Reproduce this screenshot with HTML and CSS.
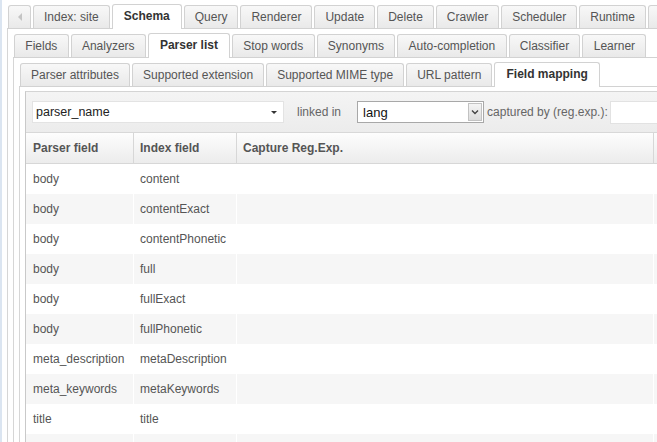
FILE: index.html
```html
<!DOCTYPE html>
<html>
<head>
<meta charset="utf-8">
<link rel="stylesheet" href="styles.css">
</head>
<body>
<div class="page">
  <div class="tabbox top">
    <div class="tabs">
      <div class="tab scroll"><span class="arrow"></span></div>
      <div class="tab">Index: site</div>
      <div class="tab sel">Schema</div>
      <div class="tab">Query</div>
      <div class="tab">Renderer</div>
      <div class="tab">Update</div>
      <div class="tab">Delete</div>
      <div class="tab">Crawler</div>
      <div class="tab">Scheduler</div>
      <div class="tab">Runtime</div>
      <div class="tab blank"></div>
    </div>
    <div class="panel">
      <div class="tabbox">
        <div class="tabs mid">
          <div class="tab">Fields</div>
          <div class="tab">Analyzers</div>
          <div class="tab sel">Parser list</div>
          <div class="tab">Stop words</div>
          <div class="tab">Synonyms</div>
          <div class="tab">Auto-completion</div>
          <div class="tab">Classifier</div>
          <div class="tab">Learner</div>
        </div>
        <div class="panel">
          <div class="tabbox">
            <div class="tabs">
              <div class="tab">Parser attributes</div>
              <div class="tab">Supported extension</div>
              <div class="tab">Supported MIME type</div>
              <div class="tab">URL pattern</div>
              <div class="tab sel">Field mapping</div>
            </div>
            <div class="panel">
              <div class="box">
                <div class="toolbar">
                  <div class="combo"><span class="combo-text">parser_name</span><span class="combo-caret"></span></div>
                  <span class="label linked">linked in</span>
                  <div class="select"><span class="select-text">lang</span><span class="select-btn"><svg width="8" height="6" viewBox="0 0 8 6"><path d="M1 1.5 L4 4.5 L7 1.5" fill="none" stroke="#444" stroke-width="1.4"/></svg></span></div>
                  <span class="label captured">captured by (reg.exp.):</span>
                  <div class="input"></div>
                </div>
                <table class="grid">
                  <colgroup>
                    <col class="c1"><col class="c2"><col class="c3"><col class="c4">
                  </colgroup>
                  <thead>
                    <tr><th>Parser field</th><th>Index field</th><th>Capture Reg.Exp.</th><th></th></tr>
                  </thead>
                  <tbody>
                    <tr><td>body</td><td>content</td><td></td><td></td></tr>
                    <tr><td>body</td><td>contentExact</td><td></td><td></td></tr>
                    <tr><td>body</td><td>contentPhonetic</td><td></td><td></td></tr>
                    <tr><td>body</td><td>full</td><td></td><td></td></tr>
                    <tr><td>body</td><td>fullExact</td><td></td><td></td></tr>
                    <tr><td>body</td><td>fullPhonetic</td><td></td><td></td></tr>
                    <tr><td>meta_description</td><td>metaDescription</td><td></td><td></td></tr>
                    <tr><td>meta_keywords</td><td>metaKeywords</td><td></td><td></td></tr>
                    <tr><td>title</td><td>title</td><td></td><td></td></tr>
                    <tr class="last"><td></td><td></td><td></td><td></td></tr>
                  </tbody>
                </table>
              </div>
            </div>
          </div>
        </div>
      </div>
    </div>
  </div>
</div>
</body>
</html>
```
FILE: styles.css
```css
html, body {
  margin: 0;
  padding: 0;
  background: #fff;
}
body {
  width: 657px;
  height: 442px;
  overflow: hidden;
  font-family: "Liberation Sans", Arial, sans-serif;
  font-size: 12px;
  color: #555;
}
.page {
  width: 760px;
  height: 442px;
  border-left: 2px solid #dbe5f1;
  box-sizing: border-box;
}
.tabbox.top {
  margin-left: 5px;
  padding-top: 4px;
}
.tabs {
  display: flex;
  align-items: flex-end;
  height: 24px;
  padding-left: 1px;
  border-bottom: 1px solid #d2d2d2;
  white-space: nowrap;
}
.tab {
  height: 22px;
  line-height: 22px;
  padding: 0 10px;
  margin-right: 2px;
  border: 1px solid #d2d2d2;
  border-bottom: none;
  border-radius: 3px 3px 0 0;
  background: linear-gradient(#f8f8f8, #e9e9e9);
  color: #555;
  flex: none;
}
.tabs.mid .tab {
  padding: 0 10.3px;
}
.tab.sel,
.tabs.mid .tab.sel {
  height: 24px;
  line-height: 23px;
  margin-bottom: -1px;
  background: #fff;
  color: #333;
  font-weight: bold;
  padding: 0 11px;
}
.tab.blank {
  width: 30px;
}
.tab.scroll {
  width: 21px;
  padding: 0;
  display: flex;
  align-items: center;
  justify-content: center;
}
.arrow {
  width: 0;
  height: 0;
  border-top: 4px solid transparent;
  border-bottom: 4px solid transparent;
  border-right: 4px solid #c4c4c4;
}
.panel {
  border-left: 1px solid #d6d6d6;
  padding: 4px 0 0 5px;
  height: 600px;
}
.box {
  border-left: 1px solid #c9c9c9;
  border-top: 1px solid #d4d4d4;
  height: 600px;
}
.toolbar {
  display: flex;
  align-items: center;
  height: 40px;
  padding-left: 6px;
  background: linear-gradient(#f4f4f4, #ececec);
  border-bottom: 1px solid #d8d8d8;
}
.combo {
  height: 20px;
  border: 1px solid #e3e3e3;
  background: #fff;
  display: flex;
  align-items: center;
  justify-content: space-between;
  padding: 0 6px 0 3px;
  width: 241px;
}
.combo-text {
  color: #222;
  font-size: 12.5px;
}
.combo-caret {
  width: 0;
  height: 0;
  border-left: 3px solid transparent;
  border-right: 3px solid transparent;
  border-top: 3px solid #333;
  margin-top: 1px;
}
.label {
  color: #666;
}
.linked {
  margin-left: 13px;
}
.select {
  margin-left: 16px;
  width: 124px;
  height: 20px;
  border: 1px solid #a8a8a8;
  background: #fff;
  display: flex;
  align-items: center;
  justify-content: space-between;
  padding-right: 1px;
}
.select-text {
  color: #111;
  font-size: 13px;
  padding-left: 5px;
}
.select-btn {
  width: 14px;
  height: 18px;
  box-sizing: border-box;
  border: 1px solid #c2c2c2;
  background: linear-gradient(#f4f4f4, #dcdcdc);
  display: flex;
  align-items: center;
  justify-content: center;
}
.captured {
  margin-left: 3px;
}
.input {
  margin-left: 2px;
  width: 120px;
  height: 21px;
  border: 1px solid #e2e2e2;
  background: #fff;
  flex: none;
}
.grid {
  border-collapse: separate;
  border-spacing: 0;
  table-layout: fixed;
  width: 730px;
}
.c1 { width: 108px; }
.c2 { width: 103px; }
.c3 { width: 417px; }
.c4 { width: 102px; }
.grid th {
  height: 30px;
  padding: 0 0 0 6px;
  text-align: left;
  font-weight: bold;
  color: #555;
  background: linear-gradient(#fdfdfd, #ececec);
  border-right: 1px solid #d7d7d7;
  border-bottom: 1px solid #d7d7d7;
}
.grid th:first-child,
.grid td:first-child {
  padding-left: 7px;
}
.grid td {
  height: 30px;
  padding: 0 0 0 6px;
  border-right: 1px solid #fff;
  white-space: nowrap;
  color: #555;
}
.grid tbody tr:nth-child(even) td {
  background: #f6f6f6;
}
```
